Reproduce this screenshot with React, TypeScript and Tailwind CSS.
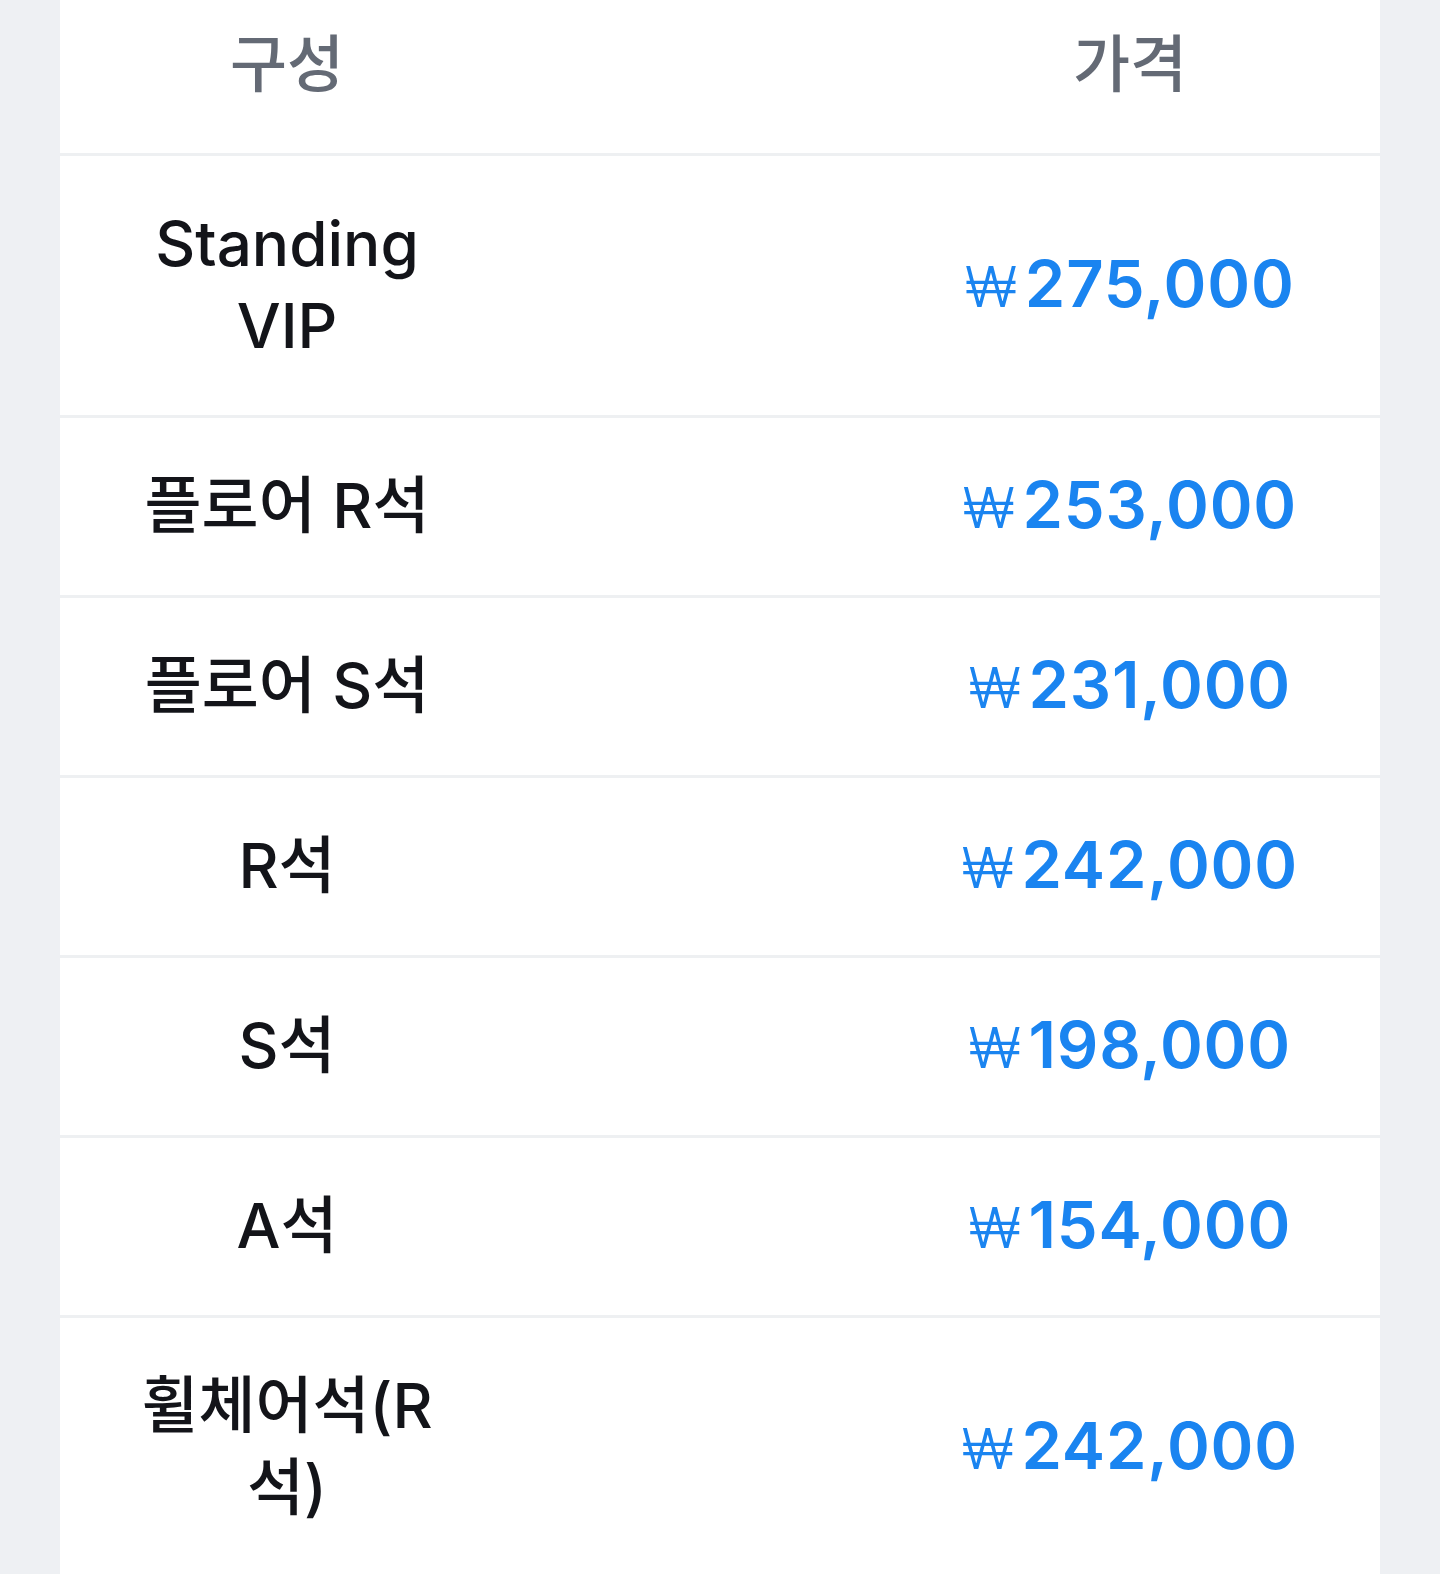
import React from "react";

const rows: { name: string; price: string }[] = [
  { name: "Standing VIP", price: "275,000" },
  { name: "플로어 R석", price: "253,000" },
  { name: "플로어 S석", price: "231,000" },
  { name: "R석", price: "242,000" },
  { name: "S석", price: "198,000" },
  { name: "A석", price: "154,000" },
  { name: "휠체어석(R석)", price: "242,000" },
];

export default function App() {
  return (
    <div
      className="w-[1440px] h-[1574px] overflow-hidden bg-[#eef0f3] px-[60px]"
      style={{ fontFamily: '"Inter", "Noto Sans CJK KR", sans-serif' }}
    >
      <div className="bg-white h-full">
        <div className="flex justify-between border-b-[3px] border-[#eef0f2]">
          <div className="w-[454px] px-[67px] pt-[24px] pb-[47px] text-center text-[62px] font-medium leading-[82px] text-[#646a75]">
            구성
          </div>
          <div className="w-[500px] pt-[24px] pb-[47px] text-center text-[62px] font-medium leading-[82px] text-[#646a75]">
            가격
          </div>
        </div>
        {rows.map((r, i) => (
          <div
            key={i}
            className="flex justify-between items-center border-b-[3px] border-[#eef0f2]"
          >
            <div className="w-[454px] px-[67px] pt-[47px] pb-[48px] text-center text-[62px] font-medium leading-[82px] text-[#131419]">
              {r.name}
            </div>
            <div className="w-[500px] flex items-baseline justify-center text-[#1a84f0]">
              <span className="text-[56px] font-light leading-[82px] mr-[8px]">₩</span>
              <span className="text-[65px] font-semibold leading-[82px] tracking-[0.8px]">{r.price}</span>
            </div>
          </div>
        ))}
      </div>
    </div>
  );
}
